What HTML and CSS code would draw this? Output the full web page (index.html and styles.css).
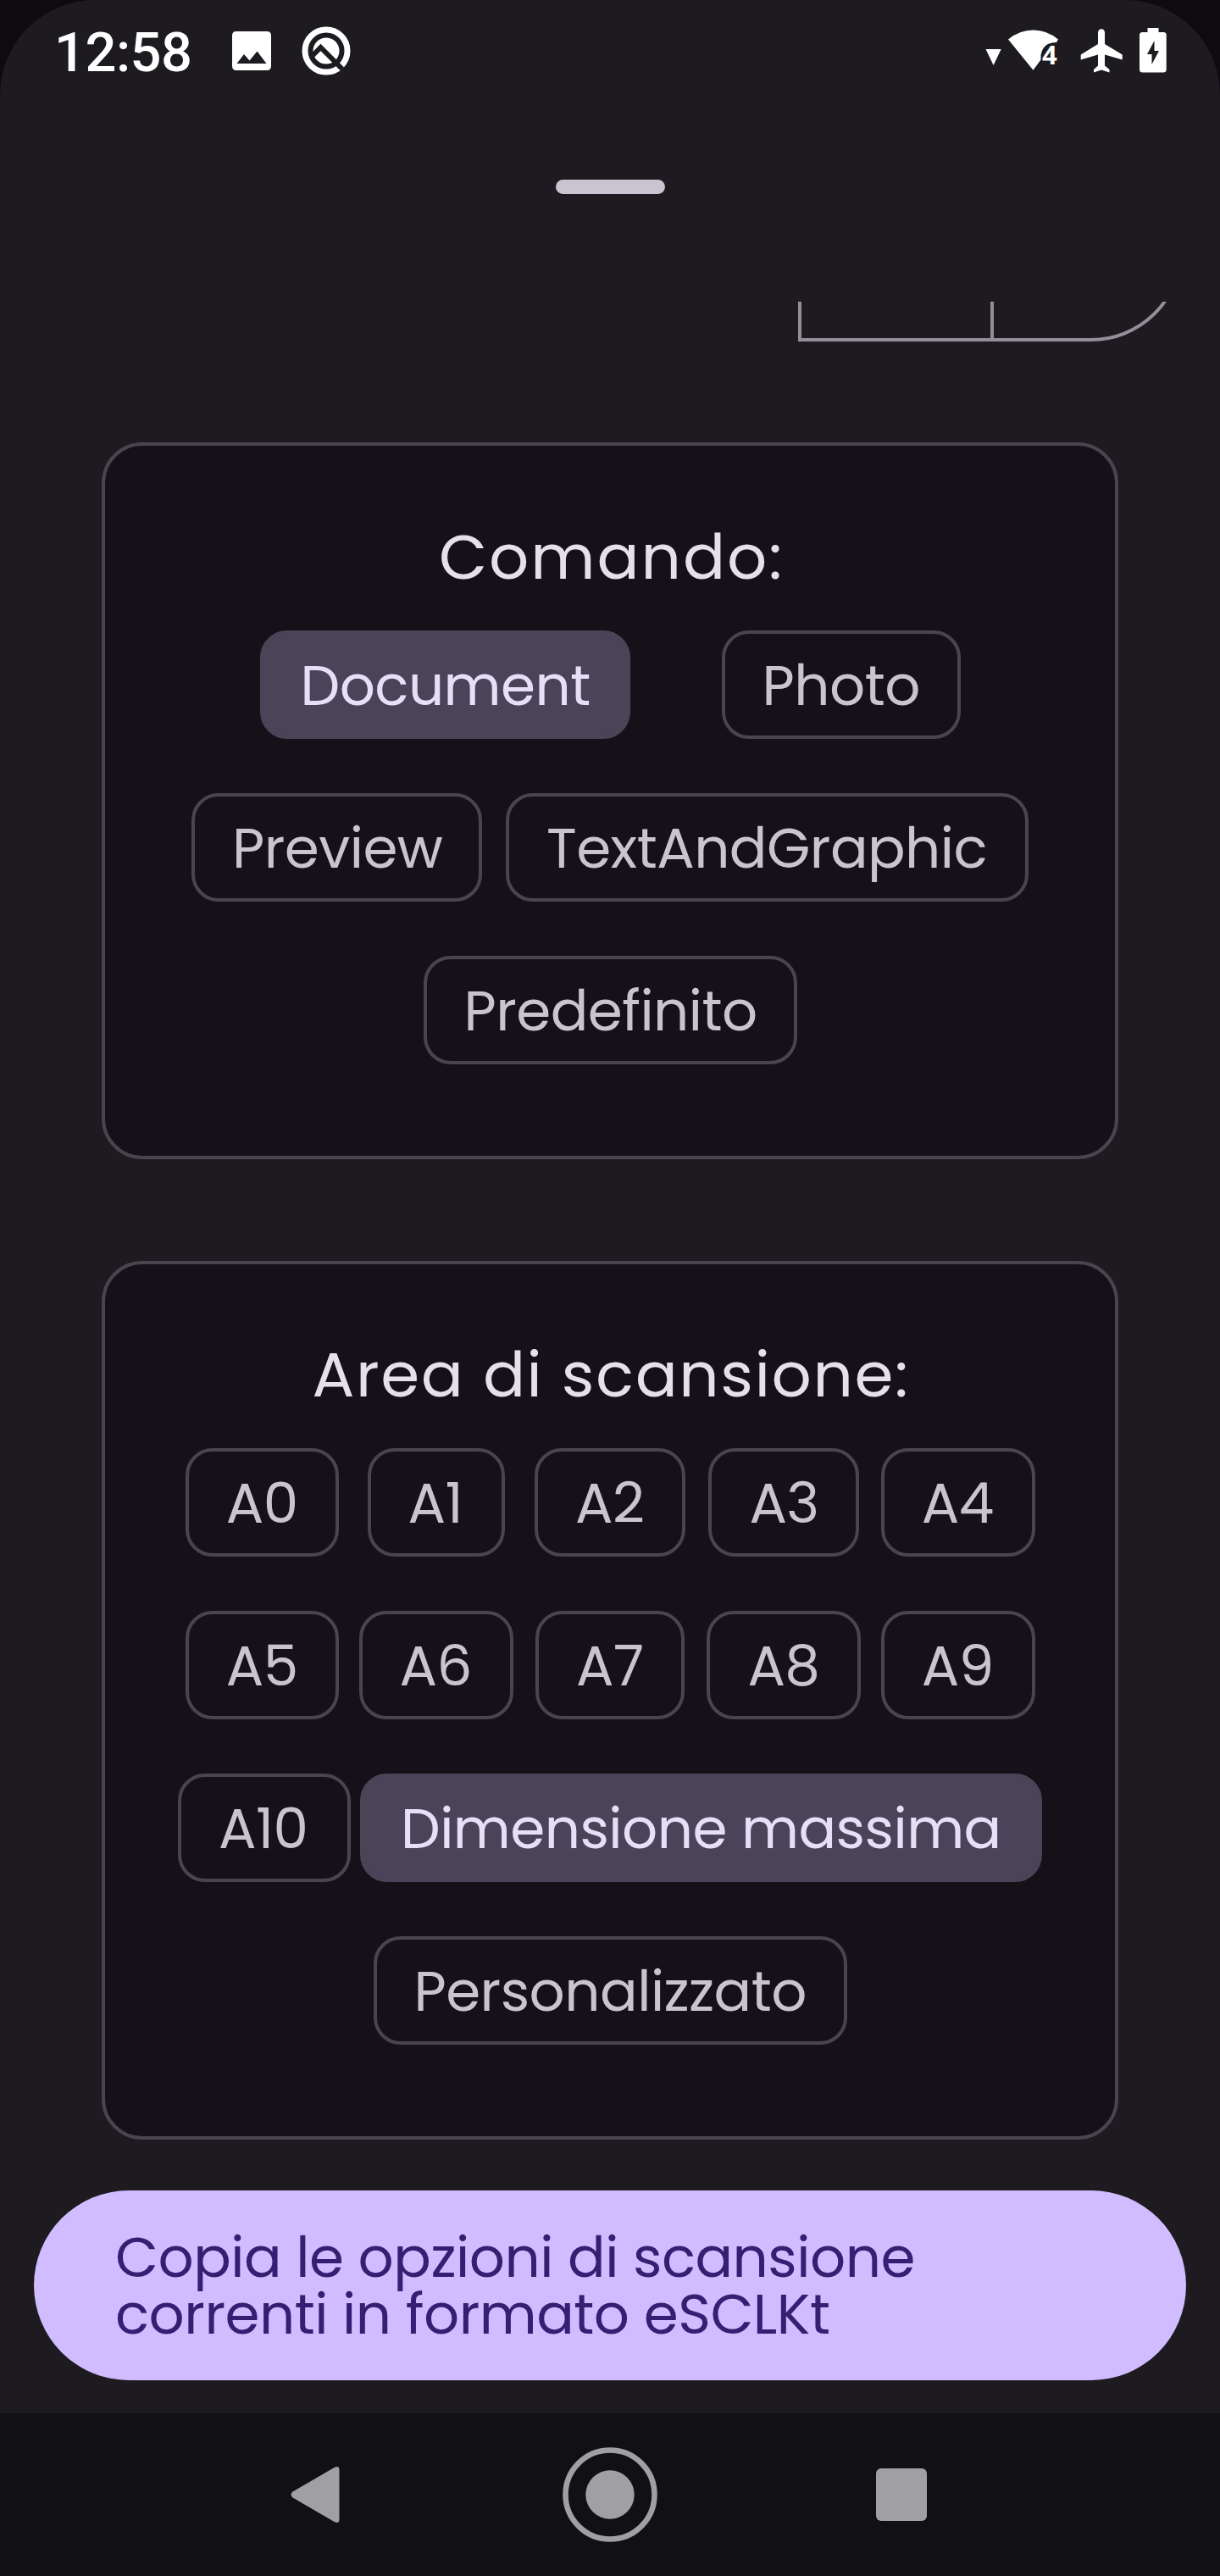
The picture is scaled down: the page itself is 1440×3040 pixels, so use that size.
FILE: index.html
```
<!DOCTYPE html>
<html lang="it">
<head>
<meta charset="utf-8">
<title>Opzioni di scansione</title>
<link rel="stylesheet" href="styles.css">
</head>
<body>
<div class="screen">
  <div class="sheet">
    <header class="status">
      <div class="status-left">
        <span class="clock">12:58</span>
        <svg class="icon-photo" width="46" height="46" viewBox="0 0 46 46"><path fill="#fff" fill-rule="evenodd" d="M5 0H41Q46 0 46 5V41Q46 46 41 46H5Q0 46 0 41V5Q0 0 5 0ZM5.500 38H40.500L29.500 23.500L20.500 34.500L14 27Z"/></svg>
        <svg class="icon-q" width="58" height="58" viewBox="0 0 58 58"><circle cx="29" cy="29" r="25" fill="none" stroke="#fff" stroke-width="7"/><circle cx="29" cy="29" r="15.500" fill="#fff"/><path d="M13 34.500L22.500 25L48 50.500" fill="none" stroke="#1d1b20" stroke-width="6"/></svg>
      </div>
      <div class="status-right">
        <svg width="214" height="56" viewBox="1163 32 214 56">
          <path fill="#fff" d="M1163.500 58H1181.700L1172.600 77Z"/>
          <path fill="#fff" d="M1190 46.500Q1203 35.500 1219.500 35.500T1249 46.500L1247 50Q1231 50 1228.500 65V70.500L1219.500 82.800Z"/>
          <text x="1230" y="76" class="wifi-num">4</text>
          <path fill="#fff" d="M1296 39Q1296 34.300 1300 34.300T1304 39V52L1324.700 64.500V70.500L1304 64.500V77.500L1309.500 82V85.500L1300 82.500L1291 85.500V82L1296 77.500V64.500L1275.700 70.500V64.500L1296 52Z"/>
          <path fill="#fff" fill-rule="evenodd" d="M1354.500 33H1367.500V38H1373.500Q1376.700 38 1376.700 41.500V82Q1376.700 85.600 1373 85.600H1348.500Q1345 85.600 1345 82V41.500Q1345 38 1348.500 38H1354.500ZM1362.500 48L1354 64H1359.500V76L1368 60H1362.500Z"/>
        </svg>
      </div>
    </header>
    <div class="handle"></div>
    <div class="clip">
      <div class="segment"></div>
      <div class="segment segment-end"></div>
    </div>

    <section class="card">
      <h2 class="title-mode">Comando:</h2>
      <div class="row row-wide">
        <div class="chip on c-document">Document</div>
        <div class="chip c-photo">Photo</div>
      </div>
      <div class="row row-mid">
        <div class="chip c-preview">Preview</div>
        <div class="chip c-textgraphic">TextAndGraphic</div>
      </div>
      <div class="row">
        <div class="chip c-default">Predefinito</div>
      </div>
    </section>

    <section class="card card-area">
      <h2 class="title-area">Area di scansione:</h2>
      <div class="row row-grid">
        <div class="chip w181">A0</div>
        <div class="chip w162">A1</div>
        <div class="chip w178">A2</div>
        <div class="chip w178">A3</div>
        <div class="chip w182">A4</div>
      </div>
      <div class="row row-grid">
        <div class="chip w181">A5</div>
        <div class="chip w182">A6</div>
        <div class="chip w176">A7</div>
        <div class="chip w182">A8</div>
        <div class="chip w182">A9</div>
      </div>
      <div class="row row-tight">
        <div class="chip c-a10">A10</div>
        <div class="chip on c-max">Dimensione massima</div>
      </div>
      <div class="row">
        <div class="chip c-custom">Personalizzato</div>
      </div>
    </section>

    <div class="copy">Copia le opzioni di scansione<br>correnti in formato eSCLKt</div>
  </div>

  <nav class="nav">
    <svg width="58" height="66" viewBox="0 0 58 66"><path fill="#a0a0a2" d="M2.500 29.500L51.500 1Q57.500-2 57.500 4V62Q57.500 68 51.500 65L2.500 36.500Q-1.500 33 2.500 29.500Z"/></svg>
    <svg class="home" width="112" height="112" viewBox="0 0 112 112"><circle cx="56" cy="56" r="52.500" fill="none" stroke="#a0a0a2" stroke-width="6.500"/><circle cx="56" cy="56" r="28.700" fill="#a0a0a2"/></svg>
    <div class="recent"></div>
  </nav>
</div>
</body>
</html>
```
FILE: styles.css
```
* { box-sizing: border-box; }
body { margin: 0; background: #0d0b10; }
.screen {
  width: 1440px; height: 3040px; overflow: hidden;
  display: flex; flex-direction: column;
  font-family: Poppins, Inter, "Open Sans", sans-serif;
}
svg { display: block; }
.sheet {
  height: 2848px; background: #1d1b20;
  border-radius: 112px 112px 0 0;
  display: flex; flex-direction: column; align-items: center;
}

.status {
  width: 100%; height: 120px; padding: 0 63px 0 64px;
  display: flex; justify-content: space-between; align-items: center;
}
.status-left { display: flex; align-items: center; }
.clock {
  width: 210px; color: #fff; white-space: nowrap;
  font: 500 65px/76px Roboto, sans-serif; letter-spacing: -0.500px; padding-top: 3px;
}
.icon-photo { margin-right: 36px; }
.wifi-num { font: 700 31px "Open Sans", sans-serif; fill: #fff; }

.handle {
  width: 129px; height: 17px; margin-top: 91.500px;
  border-radius: 9px; background: #cac4d0;
}
.clip {
  width: 100%; height: 47px; margin-top: 127.500px; padding-right: 44px;
  overflow: hidden; display: flex; justify-content: flex-end; align-items: flex-end;
}
.segment {
  width: 231px; height: 217px; flex: none;
  border: 4px solid #938f99; border-right: 0;
}
.segment-end {
  width: 227px; margin-left: -4px;
  border-right: 4px solid #938f99; border-radius: 0 108px 108px 0;
}

.card {
  width: 1200px; height: 846px; margin-top: 119px; padding-top: 83px; flex: none;
  background: #141218; border: 4px solid #49454f; border-radius: 48px;
  display: flex; flex-direction: column; align-items: center;
}
.card-area { height: 1037px; margin-top: 120px; padding-top: 82px; }
.card h2 {
  margin: 0 0 39px; height: 96px;
  color: #e6e0e9; font-weight: 400; font-size: 74px; line-height: 96px; white-space: nowrap;
}
.card .title-mode { letter-spacing: 2px; margin-right: -3px; }
.card .title-area { letter-spacing: 1.650px; margin-right: -2px; }

.row { display: flex; justify-content: center; height: 128px; margin-bottom: 64px; }
.row-wide { gap: 108px; }
.row-mid { gap: 28px; }
.row-tight { gap: 11px; }
.row-grid { display: grid; grid-template-columns: repeat(5, 205.400px); justify-items: center; }
.chip {
  height: 128px; padding: 1px 0 0 44px; flex: none;
  border: 4px solid #49454f; border-radius: 32px;
  color: #cac4d0; font-size: 66px; line-height: 120px; letter-spacing: -0.520px; white-space: nowrap;
}
.on { background: #4a4458; border-color: #4a4458; color: #e8def8; }
.c-document { width: 437px; }
.c-photo { width: 282px; }
.c-preview { width: 343px; }
.c-textgraphic { width: 617px; }
.c-default { width: 441px; }
.w162 { width: 162px; }
.w176 { width: 176px; }
.w178 { width: 178px; }
.w181 { width: 181px; }
.w182 { width: 182px; }
.c-a10 { width: 204px; }
.c-max { width: 805px; }
.c-custom { width: 559px; }

.copy {
  width: 1360px; height: 224px; margin-top: 60px; padding: 46px 0 0 96px; flex: none;
  border-radius: 112px; background: #d0bcff; color: #381e72;
  font-size: 66px; line-height: 66.700px; letter-spacing: -0.500px; white-space: nowrap;
}

.nav {
  height: 192px; background: #111113; padding: 0 346px 0 343px;
  display: flex; align-items: center; justify-content: space-between;
}
.home { margin-left: 5px; }
.recent { width: 60px; height: 62px; border-radius: 6px; background: #a0a0a2; }
```
